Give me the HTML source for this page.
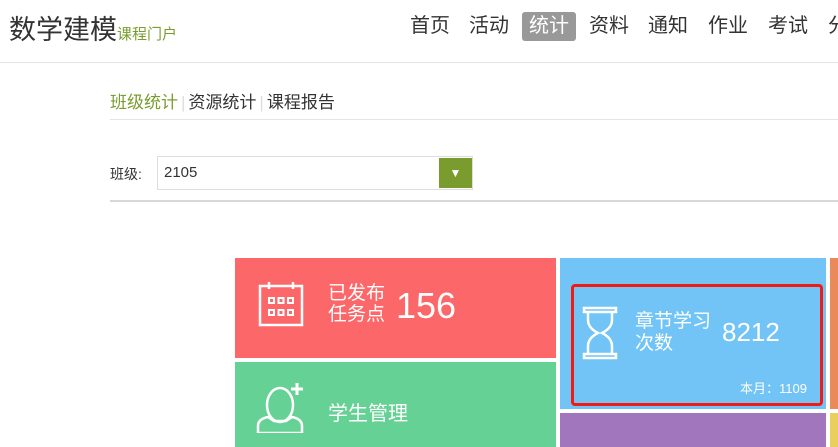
<!DOCTYPE html>
<html><head><meta charset="utf-8"><style>
*{margin:0;padding:0;box-sizing:border-box}
body{width:838px;height:447px;overflow:hidden;background:#fff;font-family:"Liberation Sans","Noto Sans CJK SC",sans-serif;color:#333;position:relative}
.a{position:absolute;white-space:nowrap}
.n{position:absolute;top:12px;font-size:20px;line-height:29px;color:#333;white-space:nowrap}
</style></head><body>
<div class="a" style="left:9px;top:8px;font-size:27px;color:#333">数学建模<span style="font-size:15px;color:#7a9c2e">课程门户</span></div>
<div class="n" style="left:410px">首页</div>
<div class="n" style="left:469px">活动</div>
<div class="n" style="left:522px;width:54px;background:#999;color:#fff;border-radius:3px;text-align:center">统计</div>
<div class="n" style="left:589px">资料</div>
<div class="n" style="left:648px">通知</div>
<div class="n" style="left:708px">作业</div>
<div class="n" style="left:768px">考试</div>
<div class="n" style="left:828px">分</div>
<div class="a" style="left:0;top:62px;width:838px;height:1px;background:#e5e5e5"></div>
<div class="a" style="left:110px;top:90px;font-size:17px;line-height:25px"><span style="color:#7a9c2e">班级统计</span><span style="color:#ddd;margin:0 3px">|</span>资源统计<span style="color:#ddd;margin:0 3px">|</span>课程报告</div>
<div class="a" style="left:110px;top:119px;width:728px;height:1px;background:#e5e5e5"></div>
<div class="a" style="left:110px;top:164px;font-size:14px">班级:</div>
<div class="a" style="left:157px;top:156px;width:316px;height:34px;border:1px solid #ddd"></div>
<div class="a" style="left:164px;top:164px;font-size:15px">2105</div>
<div class="a" style="left:439px;top:158px;width:33px;height:30px;background:#7a9c2e;color:#fff;font-size:12px;text-align:center;line-height:30px">▼</div>
<div class="a" style="left:110px;top:200px;width:728px;height:2px;background:#d8d8d8"></div>

<div class="a" style="left:235px;top:258px;width:321px;height:100px;background:#fc6769"></div>
<svg class="a" style="left:258px;top:281px" width="46" height="46" viewBox="0 0 46 46" fill="none" stroke="#fff" stroke-width="2.5"><rect x="2" y="5" width="42" height="39"/><line x1="11" y1="1" x2="11" y2="8"/><line x1="35" y1="1" x2="35" y2="8"/><g stroke-width="2"><rect x="11" y="17" width="5" height="5"/><rect x="20.5" y="17" width="5" height="5"/><rect x="30" y="17" width="5" height="5"/><rect x="11" y="29" width="5" height="5"/><rect x="20.5" y="29" width="5" height="5"/><rect x="30" y="29" width="5" height="5"/></g></svg>
<div class="a" style="left:328px;top:283px;font-size:19px;line-height:21px;color:#fff">已发布<br>任务点</div>
<div class="a" style="left:396px;top:285px;font-size:36px;color:#fff">156</div>

<div class="a" style="left:235px;top:362px;width:321px;height:85px;background:#66d194"></div>
<svg class="a" style="left:256px;top:383px" width="48" height="50" viewBox="0 0 48 50" fill="none" stroke="#fff" stroke-width="2.5"><ellipse cx="24" cy="22" rx="13" ry="17"/><path d="M2 50V43Q2 36 12 34L18 38H30L36 34Q46 36 46 43V50Z"/><path d="M41 0V12M35 6H47" stroke-width="3"/></svg>
<div class="a" style="left:328px;top:397px;font-size:20px;color:#fff">学生管理</div>

<div class="a" style="left:560px;top:258px;width:266px;height:151px;background:#71c4f5"></div>
<div class="a" style="left:571px;top:284px;width:252px;height:122px;border:3px solid #f41a14;border-radius:4px"></div>
<svg class="a" style="left:582px;top:306px" width="36" height="54" viewBox="0 0 36 54" fill="none" stroke="#fff" stroke-width="2.5"><rect x="2" y="2" width="32" height="4"/><rect x="2" y="48" width="32" height="4"/><path d="M6 6V14Q6 22 16 27Q6 32 6 40V48M30 6V14Q30 22 20 27Q30 32 30 40V48"/></svg>
<div class="a" style="left:635px;top:311px;font-size:19px;line-height:22px;color:#fff">章节学习<br>次数</div>
<div class="a" style="left:722px;top:317px;font-size:26px;color:#fff">8212</div>
<div class="a" style="left:740px;top:378px;font-size:13px;color:#fff">本月：1109</div>

<div class="a" style="left:560px;top:413px;width:266px;height:34px;background:#a176bd"></div>
<div class="a" style="left:830px;top:258px;width:8px;height:151px;background:#ea8a5b"></div>
<div class="a" style="left:830px;top:413px;width:8px;height:34px;background:#ebcf5d"></div>
</body></html>
